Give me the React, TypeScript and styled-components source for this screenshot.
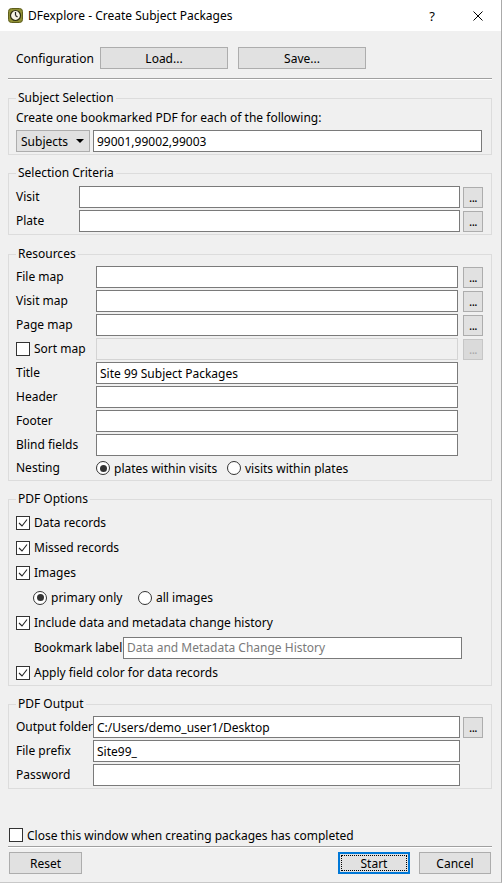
import React from 'react';
import styled, { createGlobalStyle } from 'styled-components';

const GlobalStyle = createGlobalStyle`
  html, body {
    margin: 0;
    padding: 0;
    background: #f0f0f0;
  }
  body {
    font-family: "Noto Sans", "Open Sans", sans-serif;
    font-size: 12px;
    color: #000;
  }
  * {
    box-sizing: border-box;
  }
`;

const Window = styled.div`
  width: 502px;
  height: 883px;
  display: flex;
  flex-direction: column;
  background: #f0f0f0;
  border-right: 1px solid #aaaaaa;
  border-bottom: 1px solid #c8c8c8;
`;

const TitleBar = styled.div`
  height: 31px;
  flex-shrink: 0;
  display: flex;
  align-items: center;
  background: #ffffff;
  padding-left: 8px;
`;

const TitleText = styled.span`
  margin-left: 5px;
  flex: 1;
  line-height: 16px;
`;

const CaptionButton = styled.div`
  width: 46px;
  height: 31px;
  display: flex;
  align-items: center;
  justify-content: center;
  font-size: 13px;
`;

const Body = styled.div`
  flex: 1;
  display: flex;
  flex-direction: column;
  padding: 0 9px 8px 8px;
`;

const ConfigRow = styled.div`
  margin-top: 16px;
  height: 22px;
  display: flex;
  align-items: center;
  gap: 10px;
  padding-left: 8px;
`;

const ConfigLabel = styled.span`
  width: 74px;
`;

const PushButton = styled.button<{ $w: number; $focused?: boolean }>`
  width: ${({ $w }) => $w}px;
  height: 22px;
  padding: 0;
  margin: 0;
  font: inherit;
  color: #000;
  background: #e1e1e1;
  border: 1px solid ${({ $focused }) => ($focused ? '#0078d7' : '#adadad')};
  box-shadow: ${({ $focused }) => ($focused ? 'inset 0 0 0 1px #0078d7' : 'none')};
  outline: ${({ $focused }) => ($focused ? '1px dotted #000' : 'none')};
  outline-offset: -4px;
`;

const Separator = styled.div<{ $top: number }>`
  margin-top: ${({ $top }) => $top}px;
  height: 2px;
  border-top: 1px solid #a0a0a0;
  border-bottom: 1px solid #ffffff;
`;

const Group = styled.fieldset<{ $top: number; $pt: number; $pb: number }>`
  margin: ${({ $top }) => $top}px 0 0 0;
  padding: ${({ $pt }) => $pt}px 8px ${({ $pb }) => $pb}px 7px;
  border: 1px solid #dcdcdc;
  min-width: 0;
`;

const Legend = styled.legend`
  padding: 0 2px;
  line-height: 16px;
`;

const Note = styled.div`
  line-height: 16px;
  margin-bottom: 4px;
`;

const SubjectRow = styled.div`
  display: flex;
  gap: 3px;
  padding-right: 1px;
`;

const Combo = styled.div`
  width: 74px;
  height: 22px;
  flex-shrink: 0;
  display: flex;
  align-items: center;
  justify-content: space-between;
  padding: 0 5px 0 4px;
  background: #e1e1e1;
  border: 1px solid #adadad;
`;

const ComboArrow = styled.span`
  width: 0;
  height: 0;
  border-left: 4px solid transparent;
  border-right: 4px solid transparent;
  border-top: 4px solid #000;
`;

const Field = styled.input`
  height: 22px;
  width: 100%;
  min-width: 0;
  margin: 0;
  padding: 0 3px;
  font: inherit;
  color: #000;
  background: #ffffff;
  border: 1px solid #7a7a7a;
  outline: none;

  &::placeholder {
    color: #7a7a7a;
  }

  &:disabled {
    background: #f0f0f0;
    border-color: #d4d4d4;
  }
`;

// label column, then the field, then room for a "..." button
const FormGrid = styled.div<{ $labelW: number; $gap: number }>`
  display: grid;
  grid-template-columns: ${({ $labelW }) => $labelW}px minmax(0, 1fr) 20px;
  column-gap: ${({ $gap }) => $gap}px;
  row-gap: 2px;
  align-items: center;
`;

const RowLabel = styled.div<{ $h?: number }>`
  grid-column: 1;
  line-height: ${({ $h }) => $h || 22}px;
  white-space: nowrap;
  display: flex;
  align-items: center;
  gap: 4px;
`;

const InputCell = styled.div<{ $span?: boolean; $h?: number }>`
  grid-column: ${({ $span }) => ($span ? '2 / 4' : '2')};
  height: ${({ $h }) => $h || 22}px;
  display: flex;
  align-items: center;
`;

const DotsButton = styled.div<{ $disabled?: boolean }>`
  grid-column: 3;
  width: 20px;
  height: 21px;
  display: flex;
  align-items: flex-end;
  justify-content: center;
  padding-bottom: 3px;
  line-height: 12px;
  font-size: 12px;
  letter-spacing: -0.5px;
  color: ${({ $disabled }) => ($disabled ? '#a8a8a8' : '#000')};
  background: ${({ $disabled }) => ($disabled ? '#dadada' : '#e1e1e1')};
  border: 1px solid ${({ $disabled }) => ($disabled ? '#c6c6c6' : '#adadad')};
`;

const OptionList = styled.div`
  display: flex;
  flex-direction: column;
`;

const OptionRow = styled.div<{ $indent?: number }>`
  height: 25px;
  display: flex;
  align-items: center;
  padding-left: ${({ $indent }) => $indent || 0}px;
`;

const CheckLabel = styled.label`
  display: flex;
  align-items: center;
  gap: 4px;
  white-space: nowrap;
`;

const Box = styled.span`
  width: 14px;
  height: 14px;
  flex-shrink: 0;
  display: flex;
  align-items: center;
  justify-content: center;
  background: #ffffff;
  border: 1px solid #333333;
`;

const RadioOption = styled.label<{ $w?: number }>`
  display: flex;
  align-items: center;
  gap: 4px;
  white-space: nowrap;
  width: ${({ $w }) => ($w ? `${$w}px` : 'auto')};
`;

const RadioCircle = styled.span<{ $on?: boolean }>`
  width: 14px;
  height: 14px;
  flex-shrink: 0;
  border-radius: 50%;
  border: 1px solid #333333;
  background: #ffffff;
  display: flex;
  align-items: center;
  justify-content: center;

  &::after {
    content: '';
    width: 7px;
    height: 7px;
    border-radius: 50%;
    background: ${({ $on }) => ($on ? '#333333' : 'transparent')};
  }
`;

const BookmarkLabel = styled.span`
  width: 89px;
  flex-shrink: 0;
`;

const BookmarkField = styled(Field)`
  width: 339px;
`;

const Footer = styled.div`
  margin-top: auto;
  display: flex;
  flex-direction: column;
`;

const FooterCheck = styled.div`
  height: 16px;
  display: flex;
  align-items: center;
  padding-left: 1px;
`;

const ButtonBar = styled.div`
  margin-top: 4px;
  display: flex;
  align-items: center;
  padding: 0 1px;
  gap: 9px;
`;

const Spacer = styled.div`
  flex: 1;
`;

const Check = ({ on }: { on?: boolean }) => (
  <Box>
    {on && (
      <svg width="10" height="10" viewBox="0 0 10 10">
        <polyline points="1,5 4,8 9,1.5" fill="none" stroke="#222" strokeWidth="1.1" />
      </svg>
    )}
  </Box>
);

const AppIcon = () => (
  <svg width="15" height="15" viewBox="0 0 15 15">
    <rect x="0.5" y="0.5" width="14" height="14" rx="3" fill="#8f8f34" stroke="#5e5e1c" />
    <circle cx="7.5" cy="7.5" r="5" fill="#f6f4e6" stroke="#2d2d10" strokeWidth="1.2" />
    <line x1="7.5" y1="7.5" x2="7.5" y2="4" stroke="#222" strokeWidth="1.2" />
    <line x1="7.5" y1="7.5" x2="9.5" y2="9" stroke="#222" strokeWidth="1.2" />
  </svg>
);

const CloseIcon = () => (
  <svg width="10" height="10" viewBox="0 0 10 10">
    <line x1="0.5" y1="0.5" x2="9.5" y2="9.5" stroke="#000" strokeWidth="1" />
    <line x1="9.5" y1="0.5" x2="0.5" y2="9.5" stroke="#000" strokeWidth="1" />
  </svg>
);

export default function App() {
  return (
    <>
      <GlobalStyle />
      <Window>
        <TitleBar>
          <AppIcon />
          <TitleText>DFexplore - Create Subject Packages</TitleText>
          <CaptionButton>?</CaptionButton>
          <CaptionButton>
            <CloseIcon />
          </CaptionButton>
        </TitleBar>

        <Body>
          <ConfigRow>
            <ConfigLabel>Configuration</ConfigLabel>
            <PushButton $w={128}>Load...</PushButton>
            <PushButton $w={128}>Save...</PushButton>
          </ConfigRow>
          <Separator $top={9} />

          <Group $top={10} $pt={4} $pb={2}>
            <Legend>Subject Selection</Legend>
            <Note>Create one bookmarked PDF for each of the following:</Note>
            <SubjectRow>
              <Combo>
                <span>Subjects</span>
                <ComboArrow />
              </Combo>
              <Field readOnly defaultValue="99001,99002,99003" />
            </SubjectRow>
          </Group>

          <Group $top={10} $pt={5} $pb={2}>
            <Legend>Selection Criteria</Legend>
            <FormGrid $labelW={60} $gap={3}>
              <RowLabel>Visit</RowLabel>
              <InputCell><Field readOnly /></InputCell>
              <DotsButton>...</DotsButton>
              <RowLabel>Plate</RowLabel>
              <InputCell><Field readOnly /></InputCell>
              <DotsButton>...</DotsButton>
            </FormGrid>
          </Group>

          <Group $top={11} $pt={4} $pb={2}>
            <Legend>Resources</Legend>
            <FormGrid $labelW={75} $gap={5}>
              <RowLabel>File map</RowLabel>
              <InputCell><Field readOnly /></InputCell>
              <DotsButton>...</DotsButton>
              <RowLabel>Visit map</RowLabel>
              <InputCell><Field readOnly /></InputCell>
              <DotsButton>...</DotsButton>
              <RowLabel>Page map</RowLabel>
              <InputCell><Field readOnly /></InputCell>
              <DotsButton>...</DotsButton>
              <RowLabel>
                <Check />
                Sort map
              </RowLabel>
              <InputCell><Field disabled /></InputCell>
              <DotsButton $disabled>...</DotsButton>
              <RowLabel>Title</RowLabel>
              <InputCell><Field readOnly defaultValue="Site 99 Subject Packages" /></InputCell>
              <RowLabel>Header</RowLabel>
              <InputCell><Field readOnly /></InputCell>
              <RowLabel>Footer</RowLabel>
              <InputCell><Field readOnly /></InputCell>
              <RowLabel>Blind fields</RowLabel>
              <InputCell><Field readOnly /></InputCell>
              <RowLabel $h={20}>Nesting</RowLabel>
              <InputCell $span $h={20}>
                <RadioOption $w={131}>
                  <RadioCircle $on />
                  plates within visits
                </RadioOption>
                <RadioOption>
                  <RadioCircle />
                  visits within plates
                </RadioOption>
              </InputCell>
            </FormGrid>
          </Group>

          <Group $top={10} $pt={3} $pb={0}>
            <Legend>PDF Options</Legend>
            <OptionList>
              <OptionRow>
                <CheckLabel><Check on />Data records</CheckLabel>
              </OptionRow>
              <OptionRow>
                <CheckLabel><Check on />Missed records</CheckLabel>
              </OptionRow>
              <OptionRow>
                <CheckLabel><Check on />Images</CheckLabel>
              </OptionRow>
              <OptionRow $indent={17}>
                <RadioOption $w={105}>
                  <RadioCircle $on />
                  primary only
                </RadioOption>
                <RadioOption>
                  <RadioCircle />
                  all images
                </RadioOption>
              </OptionRow>
              <OptionRow>
                <CheckLabel><Check on />Include data and metadata change history</CheckLabel>
              </OptionRow>
              <OptionRow $indent={18}>
                <BookmarkLabel>Bookmark label</BookmarkLabel>
                <BookmarkField readOnly placeholder="Data and Metadata Change History" />
              </OptionRow>
              <OptionRow>
                <CheckLabel><Check on />Apply field color for data records</CheckLabel>
              </OptionRow>
            </OptionList>
          </Group>

          <Group $top={10} $pt={4} $pb={2}>
            <Legend>PDF Output</Legend>
            <FormGrid $labelW={74} $gap={3}>
              <RowLabel>Output folder</RowLabel>
              <InputCell><Field readOnly defaultValue="C:/Users/demo_user1/Desktop" /></InputCell>
              <DotsButton>...</DotsButton>
              <RowLabel>File prefix</RowLabel>
              <InputCell><Field readOnly defaultValue="Site99_" /></InputCell>
              <RowLabel>Password</RowLabel>
              <InputCell><Field readOnly type="password" /></InputCell>
            </FormGrid>
          </Group>

          <Footer>
            <FooterCheck>
              <CheckLabel><Check />Close this window when creating packages has completed</CheckLabel>
            </FooterCheck>
            <Separator $top={3} />
            <ButtonBar>
              <PushButton $w={73}>Reset</PushButton>
              <Spacer />
              <PushButton $w={72} $focused>Start</PushButton>
              <PushButton $w={72}>Cancel</PushButton>
            </ButtonBar>
          </Footer>
        </Body>
      </Window>
    </>
  );
}
